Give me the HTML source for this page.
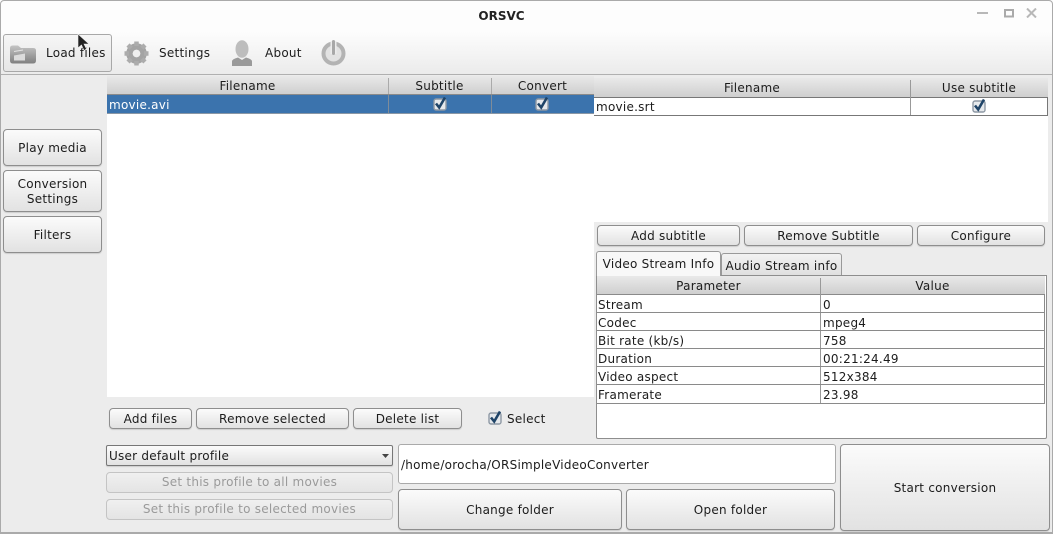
<!DOCTYPE html>
<html><head><meta charset="utf-8"><style>
html,body{margin:0;padding:0}
body{width:1053px;height:534px;overflow:hidden;position:relative;background:#ececec;font:12px/18px "DejaVu Sans",sans-serif;letter-spacing:.25px;color:#1c1c1c}
div,svg{position:absolute;box-sizing:border-box}
.b{border:1px solid #8e8e8e;border-radius:4px;background:linear-gradient(#fbfbfb,#e2e2e2);text-align:center;display:flex;align-items:center;justify-content:center;box-shadow:0 1px 1px #ccc;padding-top:1px}
.d{border-color:#c4c4c4;color:#9a9a9a;background:linear-gradient(#f0f0f0,#e4e4e4);box-shadow:none;padding-top:0;padding-bottom:1px}
.h{background:linear-gradient(#e9e9e9,#cfcfcf);text-align:center;height:19px;line-height:20px;border-bottom:1px solid #8a8a8a}
.s{width:1px;background:#aaa}
.l{height:1px;background:#8a8a8a}
.t{white-space:nowrap}
.c{width:14px;height:15px}
</style></head><body>
<svg width="0" height="0" style="left:0;top:0"><defs><symbol id="ck" viewBox="0 0 14 15"><rect x="1" y="3" width="12" height="11" rx="2" fill="#e6e9ec" stroke="#8d98a4" stroke-width="1.4"/><path d="M3 7.5L6.2 11.5L12 1.5" fill="none" stroke="#1f4468" stroke-width="2.6"/></symbol></defs></svg>

<div style="left:0;top:0;width:1053px;height:32px;background:#fdfdfd"></div>
<div style="left:0;top:32px;width:1053px;height:42px;background:linear-gradient(#fdfdfd,#ebebeb)"></div>
<div style="left:0;top:0;width:1053px;height:534px;border:1px solid #aaa;border-bottom:2px solid #aaa;border-radius:4px 4px 0 0;z-index:9;pointer-events:none"></div>
<div class="l" style="left:0;top:74px;width:1053px;background:#b0b0b0"></div>
<div class="t" style="left:0;top:7px;width:1003px;text-align:center;font-weight:bold;letter-spacing:0;color:#222">ORSVC</div>

<svg style="left:975px;top:8px" width="70" height="10"><path d="M2 5H13" stroke="#b8b8b8" stroke-width="2"/><rect x="30" y="2" width="8" height="6.5" fill="none" stroke="#aaa" stroke-width="2"/><path d="M52 0.5L61 9.5M61 0.5L52 9.5" stroke="#b8b8b8" stroke-width="2"/></svg>

<div style="left:3px;top:34px;width:109px;height:38px;border:1px solid #a8a8a8;border-radius:3px;background:linear-gradient(#f6f6f6,#e6e6e6)"></div>
<svg style="left:10px;top:45px" width="26" height="19"><defs><linearGradient id="g" x1="0" y1="0" x2="0" y2="1"><stop offset="0" stop-color="#c4c4c4"/><stop offset="1" stop-color="#808080"/></linearGradient></defs><path d="M0 3Q0 0.5 3 0.5H8L11 3H23Q26 3 26 5.5V15.5Q26 18.5 23 18.5H3Q0 18.5 0 15.5Z" fill="url(#g)"/><path d="M4 10.5L15 8.5V15.5H4Z" fill="#dcdcdc"/><path d="M4 6.5L13 5" stroke="#e4e4e4" stroke-width="1"/></svg>
<div class="t" style="left:46px;top:44px">Load files</div>
<svg style="left:124px;top:41px" width="25" height="25" viewBox="0 0 25 25"><circle cx="12.5" cy="12.5" r="7" fill="none" stroke="#a4a4a4" stroke-width="6.5"/><path d="M12.5 0.5V24.5M0.5 12.5H24.5M4 4L21 21M21 4L4 21" stroke="#acacac" stroke-width="4.5" stroke-dasharray="4.5 15"/><circle cx="12.5" cy="12.5" r="3.8" fill="#efefef"/></svg>
<div class="t" style="left:159px;top:44px">Settings</div>
<svg style="left:231px;top:40px" width="22" height="27" viewBox="0 0 22 27"><ellipse cx="11" cy="9" rx="6.5" ry="8.8" fill="#bdbdbd"/><path d="M1 26V21.5Q1 19 7 17.5L11 20L15 17.5Q21 19 21 21.5V26Z" fill="#9a9a9a"/></svg>
<div class="t" style="left:265px;top:44px">About</div>
<svg style="left:321px;top:40px" width="25" height="26" viewBox="0 0 25 26"><circle cx="12.5" cy="13.5" r="10" fill="#e2e2e2" stroke="#b3b3b3" stroke-width="4"/><path d="M12.5 1V14" stroke="#ececec" stroke-width="6"/><path d="M12.5 1.5V13.5" stroke="#a8a8a8" stroke-width="3" stroke-linecap="round"/></svg>
<svg style="left:77px;top:33px;z-index:10" width="14" height="20" viewBox="0 0 14 20"><path d="M1 1V15L4.5 12L7 17.5L9.5 16L7 11H12Z" fill="#222" stroke="#eee" stroke-width=".6"/></svg>

<div class="b" style="left:3px;top:129px;width:99px;height:37px">Play media</div>
<div class="b" style="left:3px;top:170px;width:99px;height:42px;line-height:15px">Conversion<br>Settings</div>
<div class="b" style="left:3px;top:216px;width:99px;height:37px">Filters</div>

<!-- left table -->
<div style="left:107px;top:76px;width:487px;height:321px;background:#fff"></div>
<div class="h" style="left:107px;top:76px;width:281px">Filename</div>
<div class="h" style="left:388px;top:76px;width:103px">Subtitle</div>
<div class="h" style="left:491px;top:76px;width:103px">Convert</div>
<div class="s" style="left:388px;top:78px;height:16px"></div>
<div class="s" style="left:491px;top:78px;height:16px"></div>
<div style="left:107px;top:95px;width:487px;height:19px;background:#3b73ad;border-bottom:1px solid #8a97a5"></div>
<div class="s" style="left:388px;top:95px;height:18px;background:#7f8c99"></div>
<div class="s" style="left:491px;top:95px;height:18px;background:#7f8c99"></div>
<div class="t" style="left:109px;top:96px;color:#fff">movie.avi</div>
<svg class="c" style="left:433px;top:96px"><use href="#ck"/></svg>
<svg class="c" style="left:535px;top:96px"><use href="#ck"/></svg>

<!-- right table -->
<div style="left:594px;top:78px;width:454px;height:144px;background:#fff"></div>
<div class="h" style="left:594px;top:78px;width:316px;height:20px;border-bottom:1px solid #777">Filename</div>
<div class="h" style="left:910px;top:78px;width:138px;height:20px;border-bottom:1px solid #777">Use subtitle</div>
<div class="s" style="left:910px;top:80px;height:35px;background:#999"></div>
<div class="l" style="left:594px;top:115px;width:454px;background:#777"></div>
<div class="s" style="left:1047px;top:98px;height:18px;background:#777"></div>
<div class="t" style="left:596px;top:98px">movie.srt</div>
<svg class="c" style="left:972px;top:98px"><use href="#ck"/></svg>

<div class="b" style="left:597px;top:225px;width:143px;height:21px">Add subtitle</div>
<div class="b" style="left:744px;top:225px;width:169px;height:21px">Remove Subtitle</div>
<div class="b" style="left:917px;top:225px;width:128px;height:21px">Configure</div>

<!-- tabs -->
<div class="t" style="left:721px;top:253px;width:121px;height:23px;border:1px solid #999;border-radius:3px 3px 0 0;background:linear-gradient(#f2f2f2,#e0e0e0);text-align:center;line-height:25px">Audio Stream info</div>
<div style="left:596px;top:275px;width:451px;height:164px;background:#fff;border:1px solid #8e8e8e;border-radius:0 0 2px 2px"></div>
<div class="t" style="left:596px;top:251px;width:125px;height:25px;border:1px solid #999;border-bottom:0;border-radius:3px 3px 0 0;background:#f8f8f8;text-align:center;line-height:24px;z-index:2">Video Stream Info</div>
<div class="h" style="left:597px;top:276px;width:223px;height:19px;line-height:20px">Parameter</div>
<div class="h" style="left:820px;top:276px;width:225px;height:19px;line-height:20px">Value</div>
<div class="s" style="left:820px;top:278px;height:126px;background:#999"></div>
<div class="s" style="left:1044px;top:295px;height:109px;background:#8a8a8a"></div>
<div class="l" style="left:597px;top:312px;width:448px"></div>
<div class="l" style="left:597px;top:330px;width:448px"></div>
<div class="l" style="left:597px;top:348px;width:448px"></div>
<div class="l" style="left:597px;top:366px;width:448px"></div>
<div class="l" style="left:597px;top:384px;width:448px"></div>
<div class="l" style="left:597px;top:403px;width:448px"></div>
<div class="t" style="left:598px;top:296px">Stream</div><div class="t" style="left:823px;top:296px">0</div>
<div class="t" style="left:598px;top:314px">Codec</div><div class="t" style="left:823px;top:314px">mpeg4</div>
<div class="t" style="left:598px;top:332px">Bit rate (kb/s)</div><div class="t" style="left:823px;top:332px">758</div>
<div class="t" style="left:598px;top:350px">Duration</div><div class="t" style="left:823px;top:350px">00:21:24.49</div>
<div class="t" style="left:598px;top:368px">Video aspect</div><div class="t" style="left:823px;top:368px">512x384</div>
<div class="t" style="left:598px;top:386px">Framerate</div><div class="t" style="left:823px;top:386px">23.98</div>

<!-- bottom -->
<div class="b" style="left:109px;top:408px;width:83px;height:21px">Add files</div>
<div class="b" style="left:196px;top:408px;width:153px;height:21px">Remove selected</div>
<div class="b" style="left:353px;top:408px;width:109px;height:21px">Delete list</div>
<svg class="c" style="left:488px;top:410px"><use href="#ck"/></svg>
<div class="t" style="left:507px;top:410px">Select</div>

<div class="b" style="left:106px;top:445px;width:287px;height:21px;justify-content:flex-start;padding-left:2px;border-color:#777;border-radius:2px">User default profile</div>
<svg style="left:381px;top:453px" width="10" height="6"><path d="M1 1H8L4.5 5Z" fill="#444"/></svg>
<div class="b d" style="left:106px;top:472px;width:287px;height:21px">Set this profile to all movies</div>
<div class="b d" style="left:106px;top:499px;width:287px;height:21px">Set this profile to selected movies</div>

<div class="t" style="left:398px;top:444px;width:438px;height:40px;background:#fff;border:1px solid #aaa;border-radius:3px;line-height:40px;padding-left:2px">/home/orocha/ORSimpleVideoConverter</div>
<div class="b" style="left:398px;top:489px;width:224px;height:41px">Change folder</div>
<div class="b" style="left:626px;top:489px;width:209px;height:41px">Open folder</div>
<div class="b" style="left:840px;top:444px;width:210px;height:87px">Start conversion</div>
</body></html>
